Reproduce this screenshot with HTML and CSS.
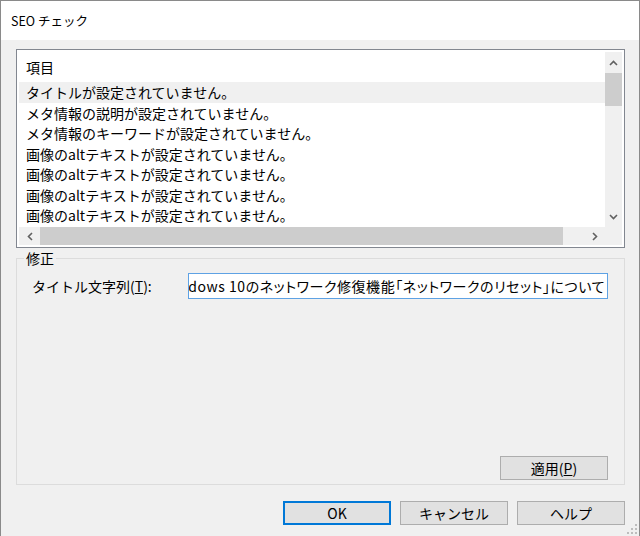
FILE: index.html
```html
<!DOCTYPE html>
<html lang="ja">
<head>
  <meta charset="UTF-8">
  <title>SEO チェック</title>
  <link rel="stylesheet" href="styles.css">
</head>
<body>

  <div class="window">
    <div class="titlebar">SEO チェック</div>

    <div class="content">
      <div class="list">
        <div class="list-view">
          <div class="list-rows">
            <div class="list-head">項目</div>
            <div class="row selected">タイトルが設定されていません。</div>
            <div class="row">メタ情報の説明が設定されていません。</div>
            <div class="row">メタ情報のキーワードが設定されていません。</div>
            <div class="row">画像のaltテキストが設定されていません。</div>
            <div class="row">画像のaltテキストが設定されていません。</div>
            <div class="row">画像のaltテキストが設定されていません。</div>
            <div class="row">画像のaltテキストが設定されていません。</div>
          </div>

          <div class="vscroll">
            <span class="arrow">
              <svg width="9" height="6" viewBox="0 0 9 6"><path d="M1 5 L4.5 1.5 L8 5" fill="none" stroke="#606060" stroke-width="1.6"/></svg>
            </span>
            <span class="vthumb"></span>
            <span class="track"></span>
            <span class="arrow">
              <svg width="9" height="6" viewBox="0 0 9 6"><path d="M1 1 L4.5 4.5 L8 1" fill="none" stroke="#606060" stroke-width="1.6"/></svg>
            </span>
          </div>

          <div class="hscroll">
            <span class="arrow">
              <svg width="6" height="9" viewBox="0 0 6 9"><path d="M5 1 L1.5 4.5 L5 8" fill="none" stroke="#606060" stroke-width="1.6"/></svg>
            </span>
            <span class="hthumb"></span>
            <span class="track"></span>
            <span class="arrow">
              <svg width="6" height="9" viewBox="0 0 6 9"><path d="M1 1 L4.5 4.5 L1 8" fill="none" stroke="#606060" stroke-width="1.6"/></svg>
            </span>
          </div>

          <div class="corner"></div>
        </div>
      </div>

      <fieldset class="group">
        <legend>修正</legend>
        <div class="group-body">
          <div class="field">
            <label class="field-label">タイトル文字列(<u>T</u>):</label>
            <div class="textbox"><span>Windows 10のネットワーク修復機能「ネットワークのリセット」について</span></div>
          </div>
          <div class="group-actions">
            <button class="btn">適用(<u>P</u>)</button>
          </div>
        </div>
      </fieldset>

      <div class="actions">
        <button class="btn btn-default">OK</button>
        <button class="btn">キャンセル</button>
        <button class="btn">ヘルプ</button>
      </div>
    </div>

    <svg class="grip" width="12" height="12" viewBox="0 0 12 12">
      <rect x="9" y="1" width="2" height="2" fill="#bdbdbd"/>
      <rect x="5" y="5" width="2" height="2" fill="#bdbdbd"/>
      <rect x="9" y="5" width="2" height="2" fill="#bdbdbd"/>
      <rect x="1" y="9" width="2" height="2" fill="#bdbdbd"/>
      <rect x="5" y="9" width="2" height="2" fill="#bdbdbd"/>
      <rect x="9" y="9" width="2" height="2" fill="#bdbdbd"/>
    </svg>
  </div>

</body>
</html>
```

FILE: styles.css
```css
* {
  box-sizing: border-box;
}

body {
  margin: 0;
  font-family: "Noto Sans CJK JP", "Noto Sans", sans-serif;
  font-size: 14px;
  color: #000;
  background-color: #f0f0f0;
}

.window {
  position: relative;
  width: 640px;
  height: 536px;
  border: 1px solid #8a8a8a;
  border-bottom: none;
  background-color: #f0f0f0;
  overflow: hidden;
}

.titlebar {
  height: 39px;
  line-height: 39px;
  padding-left: 10px;
  font-size: 12.5px;
  background-color: #fff;
}

.content {
  display: flex;
  flex-direction: column;
  padding: 9px 14px 0 15px;
}

/* list view */
.list {
  height: 199px;
  border: 1px solid #828790;
  padding: 2px;
  background-color: #fff;
}

.list-view {
  display: grid;
  grid-template-columns: 1fr 17px;
  grid-template-rows: 1fr 18px;
  height: 100%;
}

.list-rows {
  overflow: hidden;
  white-space: nowrap;
}

.list-head {
  height: 30px;
  line-height: 30px;
  padding-left: 7px;
}

.row {
  height: 20.5px;
  line-height: 20.5px;
  padding-left: 7px;
}

.row.selected {
  background-color: #f0f0f0;
}

.vscroll, .hscroll {
  display: flex;
  background-color: #f0f0f0;
}

.vscroll {
  flex-direction: column;
}

.arrow {
  display: flex;
  align-items: center;
  justify-content: center;
  flex: 0 0 21px;
}

.track {
  flex: 1;
}

.vthumb {
  height: 33px;
  background-color: #cdcdcd;
}

.hthumb {
  width: 523px;
  background-color: #cdcdcd;
}

.corner {
  background-color: #f0f0f0;
}

/* group box */
.group {
  min-width: 0;
  margin: 2px 0 0;
  padding: 7px 16px 4px 7px;
  border: 1px solid #dcdcdc;
}

.group legend {
  padding: 0 2px;
  line-height: 16px;
}

.group-body {
  display: flex;
  flex-direction: column;
  height: 207px;
}

.field {
  display: flex;
  align-items: center;
  margin-left: 8px;
}

.field-label {
  flex: 0 0 156px;
}

.textbox {
  flex: 1;
  min-width: 0;
  display: flex;
  justify-content: flex-end;
  align-items: center;
  height: 26px;
  padding: 0 2px;
  border: 1px solid #5ea2e4;
  background-color: #fff;
  overflow: hidden;
  white-space: nowrap;
}

.textbox span {
  flex-shrink: 0;
  font-feature-settings: "palt";
  letter-spacing: 0.55px;
}

.group-actions {
  display: flex;
  justify-content: flex-end;
  margin-top: auto;
}

/* buttons */
.btn {
  width: 108px;
  height: 24px;
  padding: 0;
  font-family: inherit;
  font-size: 14px;
  color: #000;
  background-color: #e1e1e1;
  border: 1px solid #adadad;
}

.btn-default {
  border: 2px solid #0078d7;
}

.actions {
  display: flex;
  justify-content: flex-end;
  gap: 9px;
  margin-top: 16px;
}

.grip {
  position: absolute;
  right: 1px;
  bottom: 1px;
}
```
